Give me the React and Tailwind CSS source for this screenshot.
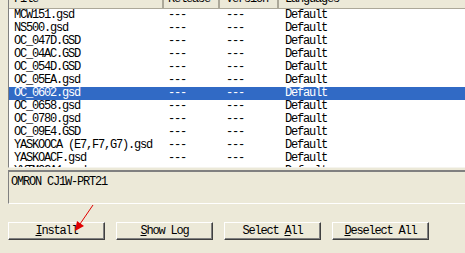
const rows = [
  'MCW151.gsd',
  'NS500.gsd',
  'OC_047D.GSD',
  'OC_04AC.GSD',
  'OC_054D.GSD',
  'OC_05EA.gsd',
  'OC_0602.gsd',
  'OC_0658.gsd',
  'OC_0780.gsd',
  'OC_09E4.GSD',
  'YASKOOCA (E7,F7,G7).gsd',
  'YASKOACF.gsd',
  'YYTMOGA1.gsd',
];

function Button({ children }) {
  return (
    <button className="w-[97px] h-[18px] bg-[#ece9d8] border border-t-white border-l-white border-r-[#404040] border-b-[#404040] shadow-[inset_-1px_-1px_0_#808080] flex items-center justify-center">
      <span className="whitespace-pre">{children}</span>
    </button>
  );
}

export default function App() {
  return (
    <div className="relative w-[465px] h-[253px] overflow-hidden bg-[#ece9d8] font-['Liberation_Mono','Noto_Sans_CJK_SC',monospace] text-[12px] tracking-[-1.2px] leading-[13px] text-black">
      {/* list */}
      <div className="ml-[8px] h-[168px] overflow-hidden bg-white border-l border-[#808080] border-b border-b-[#f5f4ee]">
        <div className="-mt-[9px] h-[18px] flex bg-[#ece9d8] border-b border-[#aca899]">
          <div className="w-[155px] pl-[5px] border-r-2 border-[#aca899] flex items-center">File</div>
          <div className="w-[56px] pl-[4px] border-r-2 border-[#aca899] flex items-center">Release</div>
          <div className="w-[59px] pl-[6px] border-r-2 border-[#aca899] flex items-center">Version</div>
          <div className="flex-1 pl-[6px] flex items-center">Languages</div>
        </div>
        {rows.map((name) => {
          const sel = name === 'OC_0602.gsd';
          return (
            <div key={name} className={`h-[13px] flex items-center ${sel ? 'bg-[#316ac5] text-white' : ''}`}>
              <div className="w-[155px] pl-[5px] whitespace-pre">{name}</div>
              <div className="w-[56px] pl-[4px]">---</div>
              <div className="w-[59px] pl-[6px]">---</div>
              <div className="flex-1 pl-[6px]">Default</div>
            </div>
          );
        })}
      </div>

      {/* description box */}
      <div className="ml-[8px] mt-[2px] h-[34px] border-t-2 border-l border-t-[#808080] border-l-[#808080] border-b border-b-white pl-[2px] pt-[4px]">
        OMRON CJ1W-PRT21
      </div>

      {/* buttons */}
      <div className="ml-[8px] mt-[18px] flex gap-[11px]">
        <Button><span className="underline">I</span>nstall</Button>
        <Button><span className="underline">S</span>how Log</Button>
        <Button>Select <span className="underline">A</span>ll</Button>
        <Button><span className="underline">D</span>eselect All</Button>
      </div>

      {/* red annotation arrow */}
      <svg className="absolute left-0 top-0" width="465" height="253">
        <line x1="93" y1="205" x2="80" y2="224" stroke="#e00000" strokeWidth="1" />
        <polygon points="75,231 77,221 84,226" fill="#e00000" />
      </svg>
    </div>
  );
}
